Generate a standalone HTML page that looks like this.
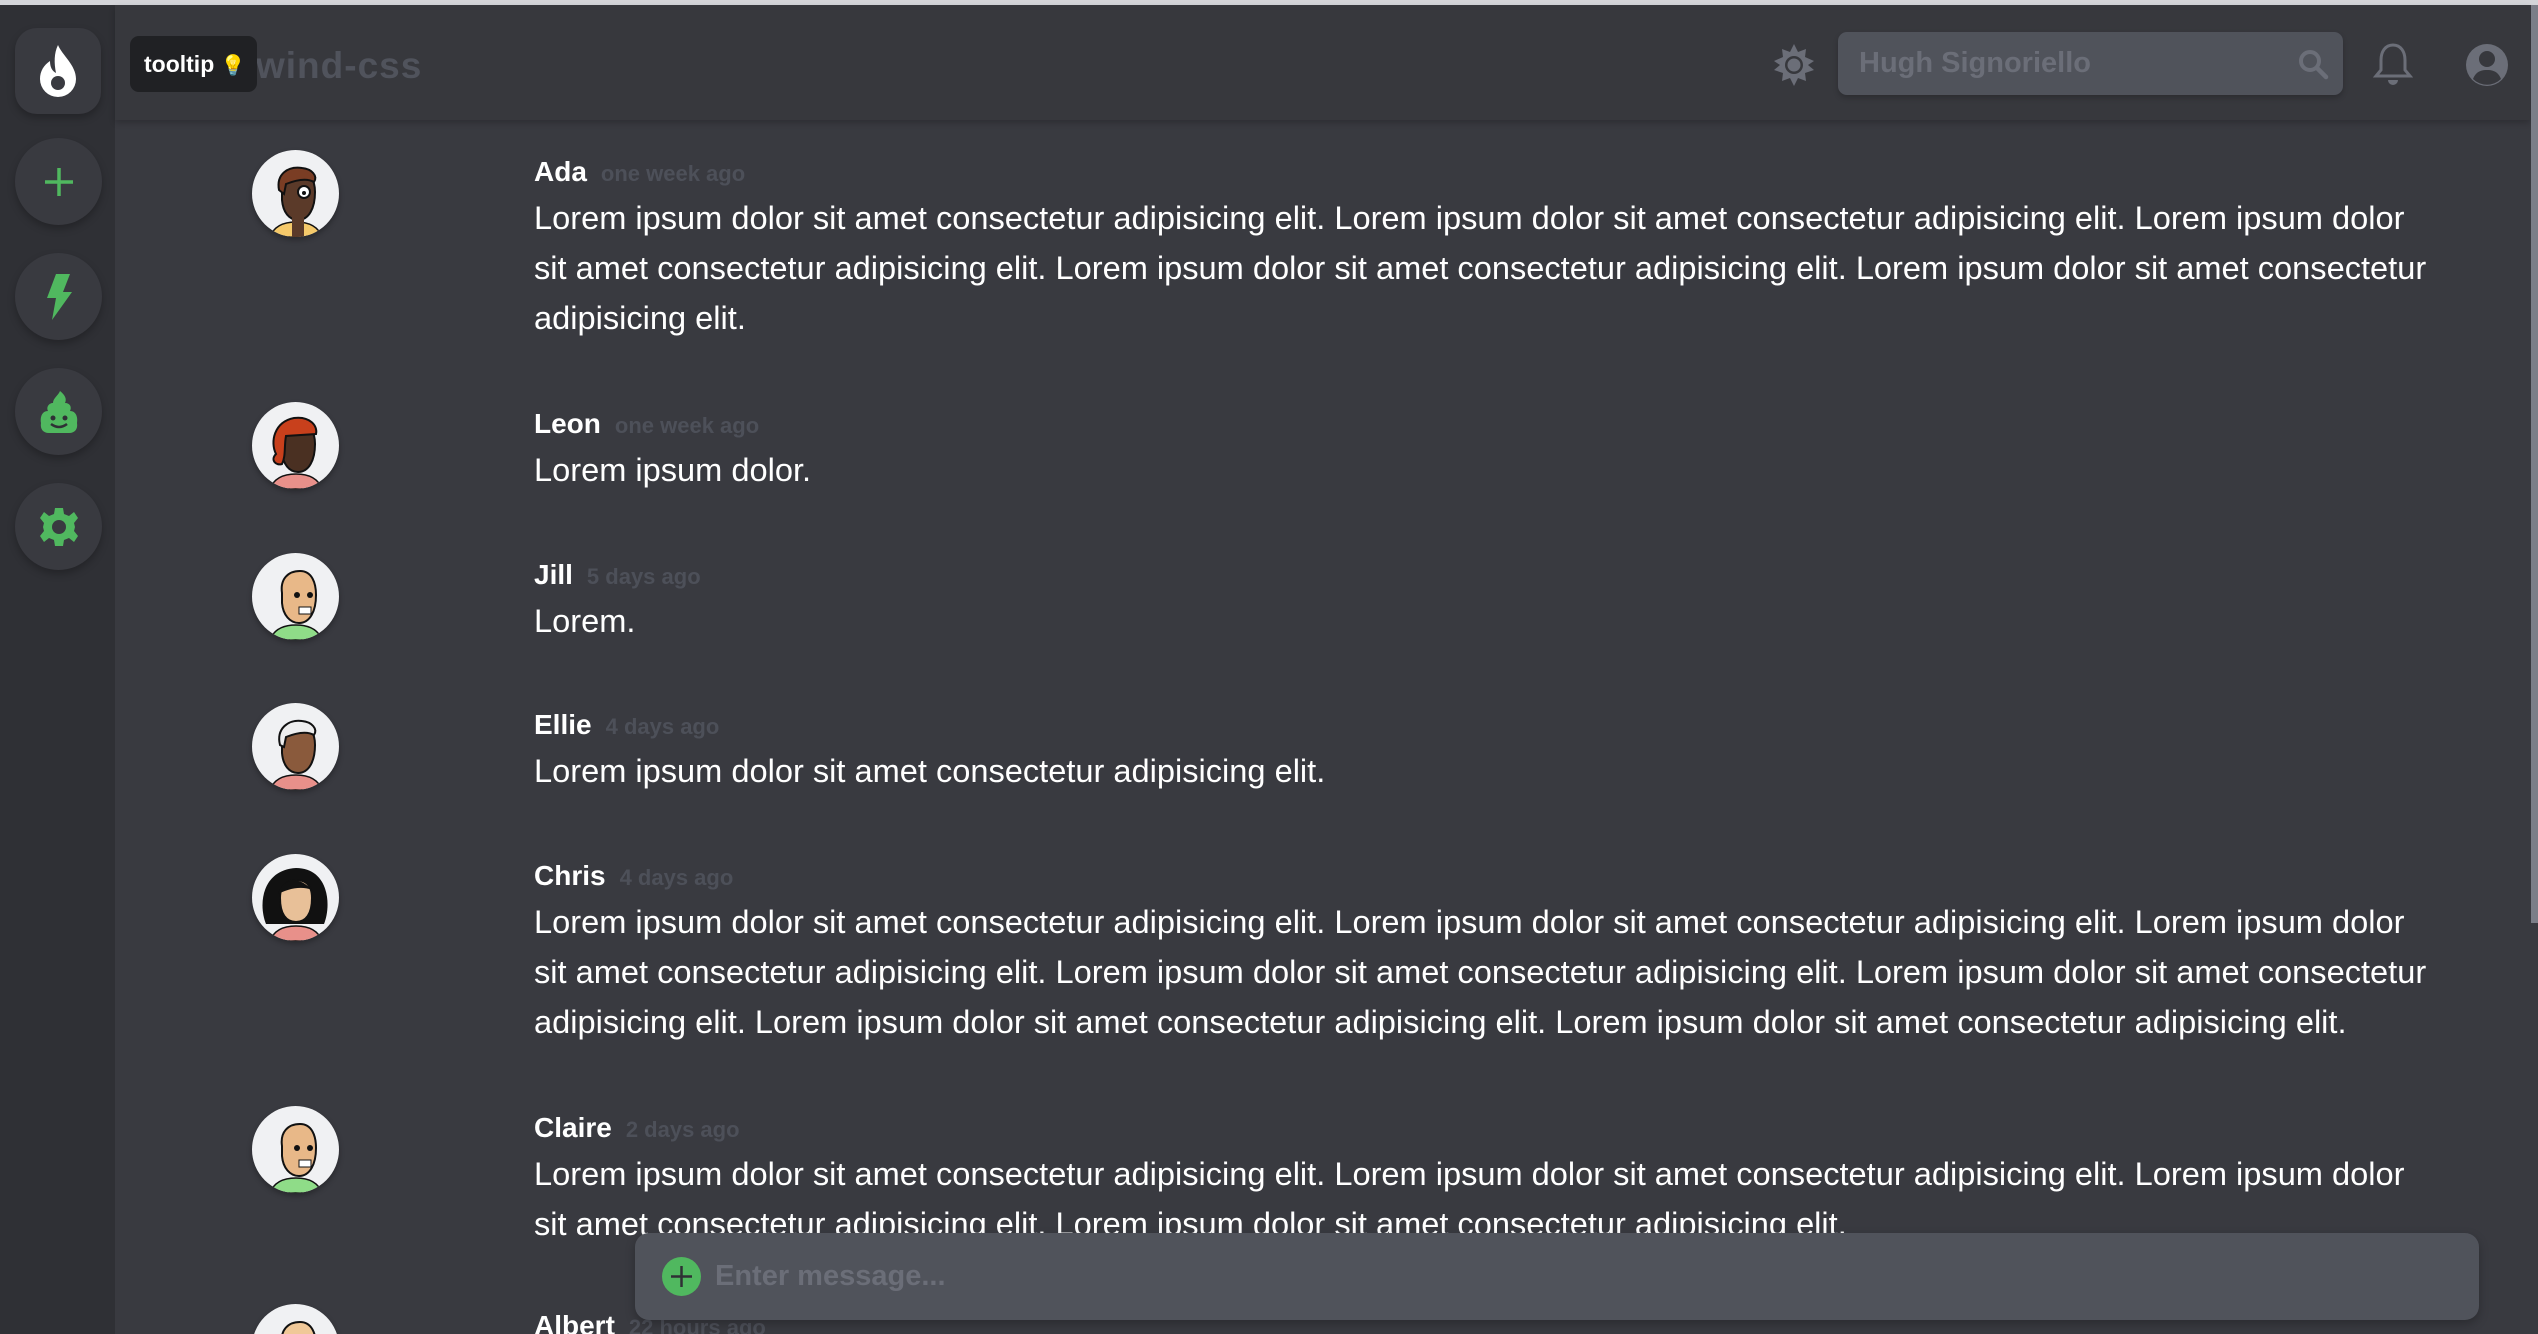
<!DOCTYPE html>
<html><head><meta charset="utf-8">
<style>
*{box-sizing:border-box;margin:0;padding:0}
html,body{width:2538px;height:1334px;overflow:hidden;background:#393a40;font-family:"Liberation Sans",sans-serif}
#root{position:relative;width:2538px;height:1334px;overflow:hidden;background:#393a40}
.topline{position:absolute;left:0;top:0;width:2538px;height:5px;background:#d4d5d9}
.side{position:absolute;left:0;top:5px;width:115px;height:1329px;background:#2f3035}
.logo{position:absolute;left:15px;top:23px;width:86px;height:86px;border-radius:22px;background:#393a40;box-shadow:0 4px 8px rgba(0,0,0,.25);display:flex;align-items:center;justify-content:center}
.sb{position:absolute;left:15px;width:87px;height:87px;border-radius:50%;background:#393a40;box-shadow:0 4px 8px rgba(0,0,0,.25);display:flex;align-items:center;justify-content:center}
.header{position:absolute;left:115px;top:5px;width:2415px;height:115px;background:#37383d;box-shadow:0 3px 6px rgba(0,0,0,.2)}
.tooltip{position:absolute;left:130px;top:36px;width:127px;height:56px;background:#202124;border-radius:9px;color:#fff;font-weight:bold;font-size:23px;line-height:56px;padding-left:14px;z-index:3}
.brand{position:absolute;left:256px;top:40px;font-size:37px;font-weight:bold;color:#50535c;letter-spacing:1px}
.search{position:absolute;height:63px;width:505px;background:#50535b;border-radius:9px;color:#6b6e78;font-size:29px;font-weight:bold;line-height:63px;padding-left:21px;box-shadow:0 3px 6px rgba(0,0,0,.2)}
.scroll{position:absolute;left:2531px;top:5px;width:7px;height:918px;background:#7b7e88}
.msg{position:absolute;left:534px;width:1960px}
.name{height:42px;line-height:42px;color:#fff;font-weight:bold;font-size:28px}
.time{color:#4d5059;font-size:22px;font-weight:bold;margin-left:14px}
.body{color:#fff;font-size:32.6px;line-height:50px;white-space:nowrap}
.av{position:absolute;left:252px;width:87px;height:87px;border-radius:50%;background:#f0f1f3;overflow:hidden;box-shadow:0 3px 6px rgba(0,0,0,.3)}
.input{position:absolute;left:635px;top:1233px;width:1844px;height:87px;background:#50535b;border-radius:14px;z-index:3;box-shadow:0 4px 10px rgba(0,0,0,.25)}
.plus{position:absolute;left:27px;top:24px;width:39px;height:39px;border-radius:50%;background:#50b85f}
.ph{position:absolute;left:80px;top:0;line-height:87px;font-size:29px;font-weight:bold;color:#6b6e78}
</style></head><body><div id="root">
<div class="topline"></div>
<div class="side">
 <div class="logo"><svg width="40" height="56" viewBox="0 0 40 56"><path d="M20 2 C24 12 38 22 38 36 A18 18 0 0 1 2 36 C2 28 6 22 12 18 C12 24 14 28 18 30 C16 20 16 10 20 2Z" fill="#fff"/><circle cx="20" cy="40" r="7" fill="#393a40"/></svg></div>
 <div class="sb" style="top:133px"><svg width="34" height="34" viewBox="0 0 34 34"><path d="M17 3V31M3 17H31" stroke="#50b85f" stroke-width="3.5"/></svg></div>
 <div class="sb" style="top:248px"><svg width="30" height="50" viewBox="0 0 30 50"><path d="M12 2H26L19 20H28L8 48L12 26H3Z" fill="#50b85f"/></svg></div>
 <div class="sb" style="top:363px"><svg width="40" height="46" viewBox="0 0 40 46"><path d="M21 2C26 6 28 10 26 14C31 14 33 18 31 22C37 22 39 28 38 34C39 40 36 44 30 44H10C4 44 1 40 2 34C1 28 3 22 9 22C7 18 10 14 14 14C14 9 19 7 21 2Z" fill="#50b85f"/><circle cx="14" cy="29" r="2.5" fill="#2f3035"/><circle cx="26" cy="29" r="2.5" fill="#2f3035"/><path d="M12 35Q20 41 28 35" stroke="#2f3035" stroke-width="2.5" fill="none"/></svg></div>
 <div class="sb" style="top:478px"><svg width="42" height="42" viewBox="0 0 42 42"><path d="M17 2H25L26 8L31 10L36 6L40 12L36 17L37 21L36 25L40 30L36 36L31 32L26 34L25 40H17L16 34L11 32L6 36L2 30L6 25L5 21L6 17L2 12L6 6L11 10L16 8Z" fill="#50b85f"/><circle cx="21" cy="21" r="7" fill="#393a40"/></svg></div>
</div>
<div class="header">
 <div class="brand" style="left:141px">wind-css</div>
 <svg style="position:absolute;left:1657px;top:38px" width="44" height="44" viewBox="0 0 44 44"><path d="M22 1L26 9L34 6L33 14L42 18L36 22L42 27L33 30L34 38L26 35L22 43L18 35L10 38L11 30L2 27L8 22L2 18L11 14L10 6L18 9Z" fill="#6b6e78"/><circle cx="22" cy="22" r="9" fill="#37383d"/><circle cx="22" cy="22" r="6.5" fill="#6b6e78"/></svg>
 <div class="search" style="left:1723px;top:27px">Hugh Signoriello<svg style="position:absolute;right:14px;top:16px" width="32" height="32" viewBox="0 0 32 32"><circle cx="13" cy="13" r="9" stroke="#6b6e78" stroke-width="4" fill="none"/><path d="M20 20L29 29" stroke="#6b6e78" stroke-width="4.5" stroke-linecap="round"/></svg></div>
 <svg style="position:absolute;left:2258px;top:37px" width="40" height="46" viewBox="0 0 40 46"><path d="M20 3C12 3 8 10 8 18V28L3 34H37L32 28V18C32 10 28 3 20 3Z" stroke="#6b6e78" stroke-width="3" fill="none"/><path d="M15 38A5 5 0 0 0 25 38Z" fill="#6b6e78"/></svg>
 <svg style="position:absolute;left:2350px;top:38px" width="44" height="44" viewBox="0 0 44 44"><circle cx="22" cy="22" r="21" fill="#6b6e78"/><circle cx="22" cy="16" r="8" fill="#37383d"/><path d="M8 36C11 28 17 27 22 27C27 27 33 28 36 36A20 20 0 0 1 8 36Z" fill="#37383d"/></svg>
</div>
<div class="tooltip">tooltip <span style="font-size:20px">💡</span></div>
<div class="scroll"></div>

<div class="av" style="top:150px"><svg width="87" height="87" viewBox="0 0 87 87"><path d="M18 87C22 76 32 72 44 72C56 72 66 76 70 87Z" fill="#f5c96a" stroke="#111" stroke-width="1.5"/><path d="M30 40C28 30 34 22 46 22C58 22 63 30 63 42C63 58 57 70 46 70C37 70 31 62 30 50Z" fill="#5b3a29" stroke="#111" stroke-width="2"/><path d="M27 40C24 24 36 16 50 18C60 19 66 26 62 32C55 28 44 30 34 34L32 44Z" fill="#7a3d24" stroke="#111" stroke-width="2"/><circle cx="52" cy="42" r="6" fill="#fff" stroke="#111" stroke-width="2"/><circle cx="52" cy="43" r="2" fill="#111"/><path d="M40 90V66H52V90Z" fill="#5b3a29"/></svg></div>
<div class="av" style="top:402px"><svg width="87" height="87" viewBox="0 0 87 87"><path d="M18 87C22 76 32 72 44 72C56 72 66 76 70 87Z" fill="#e8908a" stroke="#111" stroke-width="1.5"/><path d="M30 40C28 30 34 22 46 22C58 22 63 30 63 42C63 58 57 70 46 70C37 70 31 62 30 50Z" fill="#4a3022" stroke="#111" stroke-width="2"/><path d="M24 52C18 40 22 20 42 16C58 14 66 24 64 32L34 34C32 44 34 54 30 62C24 64 18 58 24 52Z" fill="#c8401c" stroke="#111" stroke-width="2"/></svg></div>
<div class="av" style="top:553px"><svg width="87" height="87" viewBox="0 0 87 87"><path d="M18 87C22 76 32 72 44 72C56 72 66 76 70 87Z" fill="#8fdc88" stroke="#111" stroke-width="1.5"/><path d="M30 40C28 26 36 18 48 18C60 18 64 30 64 42C64 58 58 70 47 70C38 70 31 62 30 50Z" fill="#e8b888" stroke="#111" stroke-width="2"/><circle cx="45" cy="42" r="3" fill="#111"/><circle cx="58" cy="42" r="3" fill="#111"/><rect x="47" y="54" width="12" height="7" fill="#fff" stroke="#111"/></svg></div>
<div class="av" style="top:703px"><svg width="87" height="87" viewBox="0 0 87 87"><path d="M18 87C22 76 32 72 44 72C56 72 66 76 70 87Z" fill="#e8908a" stroke="#111" stroke-width="1.5"/><path d="M30 40C28 30 34 22 46 22C58 22 63 30 63 42C63 58 57 70 46 70C37 70 31 62 30 50Z" fill="#8a5a3c" stroke="#111" stroke-width="2"/><path d="M28 42C24 26 36 16 50 18C60 19 66 26 62 32C55 28 44 30 34 34L32 44Z" fill="#eee" stroke="#111" stroke-width="2"/></svg></div>
<div class="av" style="top:854px"><svg width="87" height="87" viewBox="0 0 87 87"><path d="M14 70C6 50 10 16 44 14C76 14 80 50 72 70Z" fill="#111"/><path d="M18 87C22 76 32 72 44 72C56 72 66 76 70 87Z" fill="#e8908a" stroke="#111" stroke-width="1.5"/><path d="M28 44C28 32 34 26 44 26C56 26 60 34 60 44C60 60 54 68 44 68C34 68 28 60 28 44Z" fill="#e8c098" stroke="#111" stroke-width="2"/><path d="M26 40C30 26 46 20 60 36C50 32 38 34 26 40Z" fill="#111"/></svg></div>
<div class="av" style="top:1106px"><svg width="87" height="87" viewBox="0 0 87 87"><path d="M18 87C22 76 32 72 44 72C56 72 66 76 70 87Z" fill="#8fdc88" stroke="#111" stroke-width="1.5"/><path d="M30 40C28 26 36 18 48 18C60 18 64 30 64 42C64 58 58 70 47 70C38 70 31 62 30 50Z" fill="#e8b888" stroke="#111" stroke-width="2"/><circle cx="45" cy="42" r="3" fill="#111"/><circle cx="58" cy="42" r="3" fill="#111"/><rect x="47" y="54" width="12" height="7" fill="#fff" stroke="#111"/></svg></div>
<div class="av" style="top:1304px"><svg width="87" height="87" viewBox="0 0 87 87"><path d="M30 40C28 26 36 18 48 18C60 18 64 30 64 42C64 58 58 70 47 70C38 70 31 62 30 50Z" fill="#f0c898" stroke="#111" stroke-width="2"/></svg></div>

<div class="msg" style="top:151px"><div class="name">Ada<span class="time">one week ago</span></div><div class="body">Lorem ipsum dolor sit amet consectetur adipisicing elit. Lorem ipsum dolor sit amet consectetur adipisicing elit. Lorem ipsum dolor<br>sit amet consectetur adipisicing elit. Lorem ipsum dolor sit amet consectetur adipisicing elit. Lorem ipsum dolor sit amet consectetur<br>adipisicing elit.</div></div>
<div class="msg" style="top:403px"><div class="name">Leon<span class="time">one week ago</span></div><div class="body">Lorem ipsum dolor.</div></div>
<div class="msg" style="top:554px"><div class="name">Jill<span class="time">5 days ago</span></div><div class="body">Lorem.</div></div>
<div class="msg" style="top:704px"><div class="name">Ellie<span class="time">4 days ago</span></div><div class="body">Lorem ipsum dolor sit amet consectetur adipisicing elit.</div></div>
<div class="msg" style="top:855px"><div class="name">Chris<span class="time">4 days ago</span></div><div class="body">Lorem ipsum dolor sit amet consectetur adipisicing elit. Lorem ipsum dolor sit amet consectetur adipisicing elit. Lorem ipsum dolor<br>sit amet consectetur adipisicing elit. Lorem ipsum dolor sit amet consectetur adipisicing elit. Lorem ipsum dolor sit amet consectetur<br>adipisicing elit. Lorem ipsum dolor sit amet consectetur adipisicing elit. Lorem ipsum dolor sit amet consectetur adipisicing elit.</div></div>
<div class="msg" style="top:1107px"><div class="name">Claire<span class="time">2 days ago</span></div><div class="body">Lorem ipsum dolor sit amet consectetur adipisicing elit. Lorem ipsum dolor sit amet consectetur adipisicing elit. Lorem ipsum dolor<br>sit amet consectetur adipisicing elit. Lorem ipsum dolor sit amet consectetur adipisicing elit.</div></div>
<div class="msg" style="top:1305px"><div class="name">Albert<span class="time">22 hours ago</span></div></div>

<div class="input"><div class="plus"><svg width="39" height="39" viewBox="0 0 39 39"><path d="M19.5 9V30M9 19.5H30" stroke="#2f3035" stroke-width="2.5"/></svg></div><div class="ph">Enter message...</div></div>
</div></body></html>
